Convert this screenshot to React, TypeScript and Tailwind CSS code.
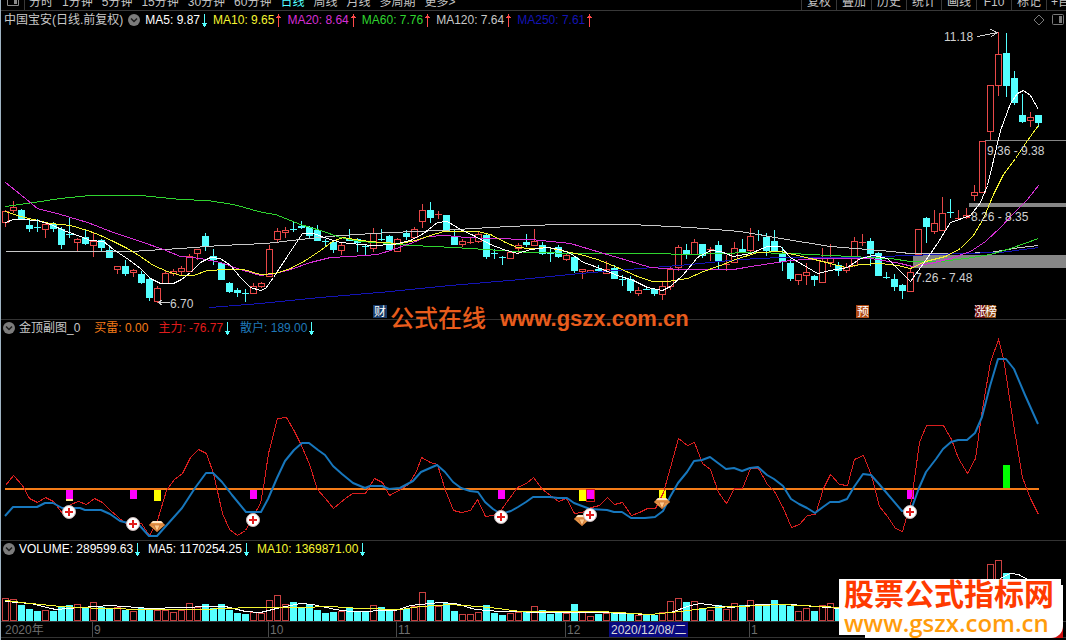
import clsx from "clsx";

const PERIODS = ["分时", "1分钟", "5分钟", "15分钟", "30分钟", "60分钟", "日线", "周线", "月线", "多周期", "更多>"];
const TOOLS = ["复权", "叠加", "历史", "统计", "画线", "F10", "标记"];

const STEP = 8.01;
const CYAN = "#54ffff";
const RED = "#e84848";

// direction, high, body top, body bottom, low (chart y)
type Candle = ["u" | "d", number, number, number, number];

const CANDLES: Candle[] = [
  ["u", 210, 211, 222, 227], ["u", 201, 207, 210, 213], ["d", 209, 210, 220, 220], ["d", 219, 225, 229, 232],
  ["d", 219, 227, 228, 232], ["u", 223, 224, 229, 238], ["d", 222, 224, 229, 232], ["d", 227, 229, 245, 249],
  ["d", 218, 234, 235, 238], ["u", 238, 239, 242, 251], ["d", 229, 237, 244, 245], ["u", 233, 241, 245, 257],
  ["d", 239, 240, 248, 251], ["d", 245, 250, 258, 258], ["u", 266, 266, 269, 274], ["d", 260, 266, 274, 276],
  ["u", 269, 270, 272, 277], ["d", 271, 274, 283, 284], ["d", 278, 279, 298, 301], ["u", 286, 288, 301, 303],
  ["u", 270, 273, 283, 283], ["u", 269, 271, 273, 276], ["u", 266, 268, 271, 275], ["u", 254, 256, 271, 271],
  ["u", 249, 249, 253, 260], ["d", 233, 236, 247, 251], ["d", 249, 256, 260, 265], ["d", 262, 263, 280, 280],
  ["d", 282, 283, 292, 293], ["d", 288, 290, 293, 297], ["d", 289, 293, 294, 302], ["u", 283, 286, 293, 293],
  ["u", 282, 283, 286, 288], ["u", 245, 249, 276, 276], ["u", 228, 231, 239, 242], ["u", 227, 230, 232, 238],
  ["d", 221, 229, 230, 232], ["d", 221, 226, 228, 229], ["d", 226, 227, 236, 239], ["d", 225, 230, 241, 241],
  ["d", 239, 241, 242, 246], ["d", 241, 242, 250, 253], ["u", 242, 245, 250, 255], ["d", 229, 239, 241, 241],
  ["d", 238, 239, 243, 252], ["d", 245, 246, 247, 255], ["u", 228, 233, 248, 252], ["d", 229, 239, 240, 241],
  ["d", 235, 236, 250, 251], ["u", 238, 239, 251, 252], ["d", 230, 233, 237, 240], ["u", 227, 229, 237, 237],
  ["u", 204, 210, 221, 228], ["d", 202, 210, 218, 223], ["u", 211, 214, 215, 219], ["d", 215, 215, 231, 231],
  ["d", 229, 237, 245, 245], ["u", 239, 241, 244, 247], ["u", 237, 242, 243, 244], ["u", 231, 234, 241, 243],
  ["d", 233, 235, 257, 259], ["d", 249, 253, 254, 259], ["d", 256, 257, 258, 265], ["u", 252, 252, 258, 258],
  ["u", 243, 245, 248, 254], ["d", 234, 242, 245, 247], ["u", 229, 241, 245, 246], ["d", 242, 245, 254, 255],
  ["d", 249, 253, 254, 262], ["d", 245, 247, 257, 258], ["u", 253, 255, 259, 261], ["d", 256, 257, 271, 273],
  ["u", 269, 269, 271, 279], ["u", 270, 270, 272, 272], ["d", 265, 269, 271, 272], ["u", 261, 269, 273, 273],
  ["d", 265, 268, 279, 279], ["d", 275, 279, 280, 286], ["d", 276, 279, 291, 293], ["u", 287, 290, 293, 296],
  ["d", 286, 289, 290, 290], ["d", 288, 289, 294, 296], ["u", 282, 286, 294, 300], ["u", 267, 269, 286, 290],
  ["u", 245, 247, 267, 271], ["d", 244, 250, 254, 259], ["u", 239, 242, 254, 255], ["d", 244, 244, 256, 258],
  ["u", 247, 249, 250, 261], ["d", 241, 245, 262, 270], ["u", 255, 264, 265, 271], ["u", 242, 248, 262, 263],
  ["d", 239, 249, 252, 252], ["u", 228, 236, 250, 252], ["d", 230, 234, 235, 241], ["d", 233, 237, 251, 256],
  ["d", 230, 241, 251, 252], ["d", 247, 254, 262, 271], ["d", 259, 263, 279, 281], ["u", 274, 274, 280, 285],
  ["u", 263, 272, 275, 285], ["d", 275, 276, 280, 286], ["u", 248, 261, 282, 282], ["u", 244, 258, 262, 267],
  ["d", 262, 265, 271, 276], ["u", 263, 267, 270, 273], ["u", 237, 241, 265, 267], ["u", 234, 242, 243, 246],
  ["d", 238, 241, 254, 266], ["d", 252, 253, 276, 276], ["d", 272, 277, 278, 279], ["d", 274, 279, 287, 291],
  ["d", 284, 285, 291, 299], ["u", 268, 272, 291, 291], ["u", 229, 229, 254, 254], ["d", 217, 218, 227, 243],
  ["u", 210, 223, 231, 234], ["u", 197, 213, 230, 230], ["d", 199, 212, 213, 218], ["u", 210, 218, 219, 220],
  ["u", 208, 215, 217, 219], ["u", 185, 192, 195, 201], ["u", 141, 141, 192, 192], ["u", 85, 85, 131, 140],
  ["u", 32, 54, 85, 96], ["d", 33, 53, 86, 97], ["d", 71, 78, 103, 105], ["d", 94, 115, 122, 123],
  ["u", 112, 117, 120, 127], ["d", 115, 115, 123, 127],
];

// top of each volume bar
const VOLUMES = [
  598, 599, 605, 609, 611, 610, 611, 607, 605, 604, 607, 602, 607, 609, 607, 610, 611, 608, 608, 610,
  610, 612, 610, 603, 607, 604, 608, 604, 610, 613, 614, 612, 613, 600, 595, 604, 602, 607, 604, 610,
  613, 612, 611, 607, 612, 612, 605, 607, 610, 609, 609, 606, 592, 600, 606, 603, 611, 614, 614, 612,
  605, 613, 615, 613, 612, 612, 606, 610, 614, 612, 613, 604, 612, 616, 614, 613, 613, 614, 613, 615,
  614, 615, 612, 601, 598, 602, 601, 608, 610, 605, 609, 603, 605, 600, 605, 606, 600, 605, 606, 611,
  608, 611, 605, 603, 609, 608, 603, 607, 604, 600, 610, 608, 609, 600, 590, 588, 592, 590, 596, 600,
  600, 596, 585, 564, 560, 573, 582, 590, 596, 602,
];

const MA_LINES = [
  {
    color: "#c8c8c8",
    points: "5,251 130,251 180,248 220,245 265,243 300,239 340,235 390,232 440,230 490,227 530,225 560,224 630,224 690,227 740,231 780,238 830,246 880,250 910,253 960,253 990,252 1020,247 1038,245",
  },
  {
    color: "#1414b4",
    points: "209,307 260,303 320,297 390,291 450,285 520,279 580,273 640,268 690,264 740,259 780,257 850,257 910,255 960,253 1000,252 1038,247",
  },
  {
    color: "#2fd42f",
    points: "5,206 33,202 60,198 90,195 140,195 180,199 207,200 233,204 262,212 275,214 300,224 320,230 340,237 360,241 390,243 410,245 435,246 470,248 500,250 530,252 580,253 650,253 690,254 750,252 790,253 850,256 890,258 910,261 940,261 965,258 990,254 1010,248 1038,238",
  },
  {
    color: "#d62fd6",
    points: "5,182 20,194 37,208 60,214 87,222 113,232 140,241 163,249 180,256 200,258 220,262 240,269 260,275 275,273 290,269 310,262 330,257 350,256 377,254 393,249 410,243 427,236 445,235 465,237 490,238 530,239 550,241 570,243 600,252 627,260 650,267 680,269 733,269 757,265 790,260 820,258 870,258 900,263 912,266 930,263 950,258 970,251 985,241 1000,227 1015,211 1027,199 1038,185",
  },
  {
    color: "#f5f531",
    points: "5,211 20,216 33,219 50,223 70,225 87,230 100,235 113,241 127,248 140,256 153,265 167,271 180,275 193,275 207,270 227,269 243,269 260,274 275,273 290,268 305,260 320,250 332,241 343,237 360,240 380,242 400,243 415,240 430,235 443,231 477,231 490,234 505,242 517,247 530,248 547,247 565,251 580,254 597,259 617,267 637,276 652,281 667,281 687,278 703,271 720,265 735,259 757,252 780,251 793,254 810,258 830,263 845,267 860,264 880,263 897,265 910,268 925,261 945,256 960,248 973,235 983,218 993,194 1003,174 1015,158 1027,140 1038,125",
  },
  {
    color: "#ffffff",
    points: "5,222 13,219 22,219 37,220 50,224 66,231 80,236 90,240 103,241 113,249 128,259 140,268 150,278 160,283 173,283 181,279 190,272 200,262 210,257 220,258 230,265 240,277 250,287 260,290 265,288 273,277 290,251 302,233 313,233 327,238 340,242 360,244 373,245 393,244 410,240 423,233 437,222 447,221 460,229 473,235 490,244 503,249 517,253 530,249 547,247 560,249 570,253 583,262 600,268 617,275 633,280 647,287 662,290 670,286 683,274 697,257 710,250 720,251 733,256 750,253 767,246 780,246 790,257 807,267 817,273 830,270 847,267 860,258 873,255 887,258 897,268 910,281 923,263 937,243 950,222 970,215 980,202 987,185 993,160 1000,130 1010,103 1017,93 1023,90 1030,95 1038,109",
  },
];

const MAIN_FORCE =
  "5,485 13,475 22,485 29,498 37,502 45,497 53,501 62,513 70,504 78,501 86,504 94,498 102,502 110,510 125,523 141,523 149,535 157,520 166,490 174,479 182,473 190,457 198,449 206,453 213,473 222,513 229,529 237,535 245,530 253,515 260,503 263,487 268,453 274,430 277,418 286,417 294,431 301,445 309,464 317,489 325,498 333,508 345,498 352,493 365,493 374,478 382,482 389,495 400,489 408,484 416,471 421,457 430,462 437,464 445,490 453,510 461,512 470,510 477,499 485,516 493,515 501,509 517,487 526,483 533,477 542,489 550,495 558,501 566,498 574,513 582,512 591,507 599,505 607,497 614,504 622,502 631,515 639,512 647,508 655,508 663,492 670,467 678,438 687,445 694,442 702,463 710,469 718,492 726,503 734,488 742,488 750,468 758,468 767,484 774,491 783,508 791,527 799,524 807,515 815,514 823,488 830,474 839,484 847,485 854,459 863,455 871,475 879,506 887,516 895,528 902,531 911,500 919,442 926,425 943,425 951,439 958,458 967,473 975,458 982,408 990,362 998,339 1003,358 1014,430 1022,477 1030,498 1038,514";

const RETAIL =
  "5,516 13,507 37,507 45,503 53,503 62,508 80,508 85,510 101,510 110,514 120,521 140,526 149,536 157,536 182,508 195,488 206,473 213,473 222,482 232,495 246,512 261,512 268,499 277,478 285,461 294,450 302,443 309,443 318,450 325,455 333,466 342,474 353,483 365,488 370,486 382,486 389,489 400,488 413,481 421,472 437,465 445,472 453,482 461,488 470,491 478,492 485,502 493,509 501,514 511,511 518,507 526,502 533,497 550,497 558,498 567,498 574,503 590,509 607,510 614,512 622,512 631,518 645,518 655,517 663,511 670,497 678,483 687,472 694,461 702,460 710,457 718,463 726,469 734,468 742,471 750,468 758,467 767,475 774,479 783,486 791,499 799,504 807,508 815,513 823,507 830,502 839,502 847,499 854,487 863,474 871,475 879,484 902,511 911,510 919,488 926,472 936,459 943,449 951,442 958,440 967,440 975,433 982,417 990,386 998,359 1006,359 1014,369 1025,395 1038,424";

const VOL_MA5 =
  "5,601 30,603 55,609 80,607 110,605 150,608 210,606 225,606 245,611 260,612 280,607 300,603 312,604 335,609 350,611 395,610 410,605 440,602 455,603 475,609 500,611 550,612 600,612 650,614 670,612 690,605 700,603 730,607 760,604 790,604 840,608 900,606 960,600 985,588 1003,576 1010,573 1018,574 1027,579";
const VOL_MA10 =
  "5,600 30,603 60,606 100,608 150,609 200,609 250,607 300,607 330,606 360,608 400,609 420,606 450,604 490,607 520,611 550,611 600,611 650,614 680,611 710,607 740,606 780,604 840,607";

const SIGNALS = [
  { x: 66, y: 490, h: 9, color: "#ff00ff" },
  { x: 130, y: 490, h: 9, color: "#ff00ff" },
  { x: 154, y: 490, h: 11, color: "#ffff00" },
  { x: 250, y: 490, h: 9, color: "#ff00ff" },
  { x: 498, y: 490, h: 9, color: "#ff00ff" },
  { x: 579, y: 490, h: 11, color: "#ffff00" },
  { x: 587, y: 490, h: 9, color: "#ff00ff" },
  { x: 659, y: 490, h: 11, color: "#ffff00" },
  { x: 907, y: 490, h: 9, color: "#ff00ff" },
  { x: 1003, y: 465, h: 23, color: "#00ff00" },
];
const CROSSES = [[69, 512], [133, 524], [253, 520], [501, 517], [590, 515], [910, 512]];
const GEMS = [[157, 526], [582, 520], [662, 503]];

const MONTHS = [
  { x: 92, label: "9" },
  { x: 268, label: "10" },
  { x: 396, label: "11" },
  { x: 565, label: "12" },
  { x: 749, label: "1" },
];

const cx = (i: number) => Math.round(5 + STEP * i);

function Arrow({ up }: { up?: boolean }) {
  return (
    <svg
      width="5"
      height="13"
      viewBox="0 0 5 13"
      fill="currentColor"
      shapeRendering="crispEdges"
      className={clsx("shrink-0", up ? "text-[#ff4a4a]" : "text-[#54ffff]")}
    >
      {up ? <path d="M2 0h1v13H2zM1 2h3v1H1zM0 3h5v1H0z" /> : <path d="M2 0h1v13H2zM0 9h5v1H0zM1 10h3v2H1z" />}
    </svg>
  );
}

function Toggle({ label }: { label: string }) {
  return (
    <button type="button" aria-label={label} className="shrink-0">
      <svg width="12" height="12" viewBox="0 0 12 12" className="block">
        <circle cx="6" cy="6" r="6" fill="#7c7c7c" />
        <path d="M3 4.500l3 3 3-3" fill="none" stroke="#1c1c1c" strokeWidth="1.500" />
      </svg>
    </button>
  );
}

function Value({ text, className, arrow }: { text: string; className: string; arrow?: "up" | "down" }) {
  return (
    <span className={clsx("flex items-center gap-[2px]", className)}>
      {text}
      {arrow && <Arrow up={arrow === "up"} />}
    </span>
  );
}

function Toolbar() {
  return (
    <header className="flex h-[11px] items-end justify-between overflow-hidden border-b border-[#383838] text-[#c4c4c4]">
      <div className="flex items-end">
        <div className="flex h-[10px] w-6 items-start justify-center border-r border-[#383838]">
          <svg width="12" height="6" viewBox="0 0 12 6">
            <path d="M.5 0v5.500h11V0" fill="none" stroke="#8a8a8a" />
            <path d="M7 0h3v4H7z" fill="#8a8a8a" />
          </svg>
        </div>
        <nav className="flex gap-[9px] pl-1">
          {PERIODS.map((p) => (
            <button key={p} type="button" className={clsx("leading-4 whitespace-nowrap", p === "日线" && "text-[#54ffff]")}>
              {p}
            </button>
          ))}
        </nav>
      </div>
      <div className="flex items-end">
        {TOOLS.map((t) => (
          <button key={t} type="button" className="w-[35px] border-l border-[#383838] leading-4">
            {t}
          </button>
        ))}
        <button type="button" className="w-5 overflow-hidden border-l border-[#383838] pl-1 text-left leading-4 whitespace-nowrap">
          +自
        </button>
      </div>
    </header>
  );
}

function PriceChart() {
  return (
    <svg viewBox="1 29 1065 290" className="block h-auto w-full" shapeRendering="crispEdges">
      {/* price gaps */}
      <g fill="#868686">
        <rect x="985" y="140" width="81" height="1" />
        <rect x="969" y="203" width="97" height="4" />
        <rect x="913" y="255" width="153" height="13" />
      </g>
      {CANDLES.map(([dir, high, top, bottom, low], i) => {
        const x = cx(i);
        const color = dir === "u" ? RED : CYAN;
        const thin = bottom - top <= 1;
        return (
          <g key={i} fill={color}>
            <rect x={x} y={high} width="1" height={top - high} />
            <rect x={x} y={bottom} width="1" height={Math.max(low - bottom, 0)} />
            {dir === "u" && !thin ? (
              <rect x={x - 2.5} y={top + 0.5} width="6" height={bottom - top} fill="none" stroke={color} />
            ) : (
              <rect x={x - 3} y={top} width="7" height={thin ? 1 : bottom - top} />
            )}
          </g>
        );
      })}
      <g transform="translate(.5 .5)" fill="none">
        {MA_LINES.map((l) => (
          <polyline key={l.color} points={l.points} stroke={l.color} />
        ))}
        <path d="M977 36l20-4M990 29l7 3-6 4" stroke="#d0d0d0" />
        <path d="M169 302h-11M162 299l-4 3 4 3" stroke="#d0d0d0" />
      </g>
      <g fill="#d0d0d0" fontSize="12">
        <text x="944" y="41">11.18</text>
        <text x="170" y="308">6.70</text>
        <text x="987" y="155">9.36 - 9.38</text>
        <text x="971" y="221">8.26 - 8.35</text>
        <text x="915" y="282">7.26 - 7.48</text>
      </g>
      <rect x="373" y="305" width="14" height="13" fill="#173a68" />
      <rect x="856" y="305" width="13" height="13" fill="#b04a14" />
      <rect x="975" y="305" width="10" height="13" fill="#6c0c0c" />
      <rect x="985" y="305" width="11" height="13" fill="#8c4410" />
      <g fill="#ffffff" fontSize="12">
        <text x="374" y="316">财</text>
        <text x="857" y="316">预</text>
        <text x="974" y="316">涨</text>
        <text x="985" y="316">榜</text>
      </g>
    </svg>
  );
}

function SignalChart() {
  return (
    <svg viewBox="1 336 1065 204" className="block h-auto w-full">
      <g shapeRendering="crispEdges">
        <rect x="5" y="488" width="1034" height="2" fill="#f57c18" />
        {SIGNALS.map((s) => (
          <rect key={s.x} x={s.x} y={s.y} width="7" height={s.h} fill={s.color} />
        ))}
        <rect x="66" y="499" width="7" height="2" fill="#ffe08a" />
        <rect x="586.500" y="489.500" width="8" height="12" fill="none" stroke="#d01818" />
        <polyline points={MAIN_FORCE} transform="translate(.5 .5)" fill="none" stroke="#d81e1e" />
      </g>
      <polyline points={RETAIL} fill="none" stroke="#1777bd" strokeWidth="2" strokeLinejoin="round" />
      {GEMS.map(([x, y]) => (
        <g key={x} transform={`translate(${x} ${y})`}>
          <path d="M-4-5h8l4 4-8 7-8-7z" fill="#e8974a" />
          <path d="M-4-5h8l2 2H-6z" fill="#ffe6c4" />
          <path d="M-3-1h6L0 5z" fill="#ffc98a" />
          <path d="M-8-1H8M-3-1L0 6l3-7" fill="none" stroke="#b8622a" strokeWidth=".6" />
        </g>
      ))}
      {CROSSES.map(([x, y]) => (
        <g key={x} transform={`translate(${x} ${y})`}>
          <circle r="6.500" fill="#ffffff" stroke="#c9b6b6" />
          <path d="M-4 0h8M0-4v8" stroke="#e01c1c" strokeWidth="2" />
        </g>
      ))}
    </svg>
  );
}

function VolumeChart() {
  return (
    <svg viewBox="1 557 1065 80" className="block h-auto w-full" shapeRendering="crispEdges">
      <rect x="1" y="621" width="1065" height="1" fill="#3a3a3a" />
      {VOLUMES.map((top, i) =>
        CANDLES[i][0] === "u" ? (
          <rect key={i} x={cx(i) - 2.5} y={top + 0.5} width="6" height={620 - top} fill="none" stroke="#c94040" />
        ) : (
          <rect key={i} x={cx(i) - 3} y={top} width="7" height={621 - top} fill={CYAN} />
        ),
      )}
      <g transform="translate(.5 .5)" fill="none">
        <polyline points={VOL_MA5} stroke="#ffffff" />
        <polyline points={VOL_MA10} stroke="#f5f531" />
      </g>
      <g fill="#6e6e6e" fontSize="12">
        <text x="5" y="634">2020年</text>
        {MONTHS.map((m) => (
          <g key={m.x}>
            <rect x={m.x} y="622" width="1" height="15" fill="#4a4a4a" />
            <text x={m.x + 2} y="634">{m.label}</text>
          </g>
        ))}
      </g>
      <rect x="609" y="622" width="79" height="15" fill="#0a0a80" />
      <text x="611" y="634" fontSize="12" fill="#dcdcdc">2020/12/08/二</text>
    </svg>
  );
}

export default function App() {
  return (
    <main className="relative min-h-screen overflow-hidden border-l border-[#9fb4c4] bg-black font-['Liberation_Sans','Noto_Sans_CJK_SC',sans-serif] text-[12px] leading-4 text-[#c8c8c8]">
      <Toolbar />

      <section className="border-b border-[#333333]">
        <div className="flex h-[18px] items-center justify-between">
          <div className="flex items-center gap-[6px] pl-[3px] whitespace-nowrap">
            <span className="flex items-center gap-[5px]">
              中国宝安(日线.前复权)
              <Toggle label="主图" />
              <Value text="MA5: 9.87" className="text-white" arrow="down" />
            </span>
            <Value text="MA10: 9.65" className="text-[#f5f531]" arrow="up" />
            <Value text="MA20: 8.64" className="text-[#d62fd6]" arrow="up" />
            <Value text="MA60: 7.76" className="text-[#2fd42f]" arrow="up" />
            <Value text="MA120: 7.64" className="text-[#c8c8c8]" arrow="up" />
            <Value text="MA250: 7.61" className="text-[#1414b4]" arrow="up" />
          </div>
          <svg width="32" height="12" viewBox="0 0 32 12" fill="none" stroke="#7a7a7a">
            <path d="M5 1l5 5-5 5-5-5z" />
            <rect x="18.500" y=".5" width="11" height="10" rx="1" />
            <path d="M25 2h3v7h-3z" fill="#7a7a7a" stroke="none" />
          </svg>
        </div>
        <PriceChart />
      </section>

      <section className="border-b border-[#333333]">
        <div className="flex h-4 items-center gap-[10px] pl-[2px] whitespace-nowrap">
          <span className="flex items-center gap-1 pr-1">
            <Toggle label="金顶副图" />
            金顶副图_0
          </span>
          <Value text="买雷: 0.00" className="text-[#f57c18]" />
          <Value text="主力: -76.77" className="text-[#e01c1c]" arrow="down" />
          <Value text="散户: 189.00" className="text-[#1f78b8]" arrow="down" />
        </div>
        <SignalChart />
      </section>

      <section className="border-b border-[#333333]">
        <div className="flex h-4 items-center gap-2 pl-[2px] whitespace-nowrap text-white">
          <span className="flex items-center gap-1">
            <Toggle label="成交量" />
            <Value text="VOLUME: 289599.63" className="text-white" arrow="down" />
          </span>
          <Value text="MA5: 1170254.25" className="text-white" arrow="down" />
          <Value text="MA10: 1369871.00" className="text-[#f5f531]" arrow="down" />
        </div>
        <VolumeChart />
      </section>

      <div className="absolute top-[305px] left-[389px] flex items-center gap-[14px] text-[#e85c1c] whitespace-nowrap">
        <span className="text-[24px] leading-7 font-medium">公式在线</span>
        <a href="#" className="text-[22px] leading-7 font-bold">www.gszx.com.cn</a>
      </div>

      <div className="absolute right-[5px] bottom-[5px]">
        <div className="absolute top-[6px] -right-[2px] -bottom-[3px] left-[26px] bg-[#d01010]">
          <div className="h-full rounded-br-xl bg-white" />
        </div>
        <div className="relative rounded-br-xl bg-white pr-[7px] pl-[5px] whitespace-nowrap">
          <p className="text-[30px] leading-8 font-bold text-[#ff3a00]">股票公式指标网</p>
          <a href="#" className="block font-['Open_Sans',sans-serif] text-[24px] leading-6 font-semibold text-[#ff9c0c]">
            www.gszx.com.cn
          </a>
        </div>
      </div>
    </main>
  );
}
